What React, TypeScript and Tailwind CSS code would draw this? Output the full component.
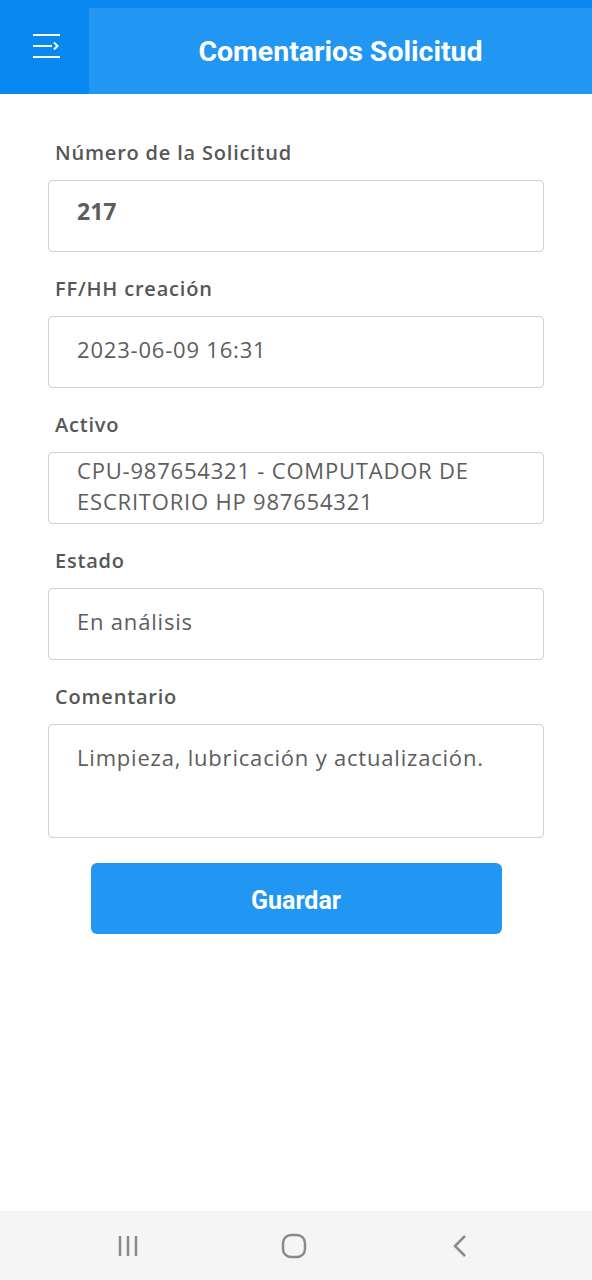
import React from "react";

const fields = [
  { label: "Número de la Solicitud", value: "217", bold: true },
  { label: "FF/HH creación", value: "2023-06-09 16:31" },
  { label: "Activo", value: "CPU-987654321 - COMPUTADOR DE ESCRITORIO HP 987654321", multi: true },
  { label: "Estado", value: "En análisis" },
];

export default function App() {
  return (
    <main className="relative h-[1280px] w-[592px] bg-white font-['Open_Sans',sans-serif]">
      {/* HEADER */}
      <div className="flex h-[94px] w-full bg-[#0a88f2]">
        <div className="flex h-full w-[89px] items-center justify-center">
          <svg width="30" height="26" viewBox="0 0 30 26" fill="none" className="ml-[4px] mt-[-2px]">
            <path d="M1 2h27M1 13h19M1 24h27" stroke="white" strokeWidth="2" />
            <path d="M22 9.5l3.5 3.5-3.5 3.5" stroke="white" strokeWidth="2" />
          </svg>
        </div>
        <div className="mt-[8px] flex flex-1 items-center justify-center bg-[#2196f3] pt-[2px]">
          <h1 className="font-['Roboto',sans-serif] text-[28.5px] font-bold text-white">
            Comentarios Solicitud
          </h1>
        </div>
      </div>

      {/* FORM */}
      <div className="flex flex-col px-[48px] pt-[39px]">
        {fields.map((f) => (
          <div key={f.label} className="mb-[17px] flex flex-col">
            <label className="h-[40px] pl-[7px] text-[20px] font-semibold leading-[40px] tracking-[0.8px] text-[#575757]">
              {f.label}
            </label>
            <div
              className={
                "mt-[7px] flex h-[72px] items-center rounded-[4px] border border-[#d2d2d2] pl-[28px] pr-[30px] text-[#5d5d5d] " +
                (f.bold ? "pb-[9px] text-[23px] font-bold" : f.multi ? "pb-[4px] text-[22px] tracking-[0.8px]" : "pb-[6px] text-[22px] tracking-[0.8px]")
              }
            >
              <span className={f.multi ? "leading-[31px]" : "leading-none"}>{f.value}</span>
            </div>
          </div>
        ))}
        <div className="flex flex-col">
          <label className="h-[40px] pl-[7px] text-[20px] font-semibold leading-[40px] tracking-[0.8px] text-[#575757]">
            Comentario
          </label>
          <div className="mt-[7px] h-[114px] rounded-[4px] border border-[#d2d2d2] pl-[28px] pt-[17px] text-[22px] leading-[30px] tracking-[0.8px] text-[#5d5d5d]">
            Limpieza, lubricación y actualización.
          </div>
        </div>
        <div className="mt-[25px] flex justify-center">
          <button className="h-[71px] w-[411px] rounded-[6px] bg-[#2196f3] pt-[5px] font-['Roboto',sans-serif] text-[25px] font-bold text-white">
            Guardar
          </button>
        </div>
      </div>

      {/* ANDROID NAV BAR */}
      <div className="absolute bottom-0 left-0 flex h-[69px] w-full items-center justify-between bg-[#f5f5f5] pl-[117px] pr-[124px]">
        <svg width="22" height="24" viewBox="0 0 22 24">
          <path d="M3 2v20M11 2v20M19 2v20" stroke="#8a8a8a" strokeWidth="2.5" />
        </svg>
        <svg width="26" height="26" viewBox="0 0 26 26" className="ml-[-4px]">
          <rect x="2" y="2" width="22" height="22" rx="8" fill="none" stroke="#8a8a8a" strokeWidth="2.5" />
        </svg>
        <svg width="16" height="24" viewBox="0 0 16 24">
          <path d="M13 2L3 12l10 10" fill="none" stroke="#8a8a8a" strokeWidth="2.5" />
        </svg>
      </div>
    </main>
  );
}
